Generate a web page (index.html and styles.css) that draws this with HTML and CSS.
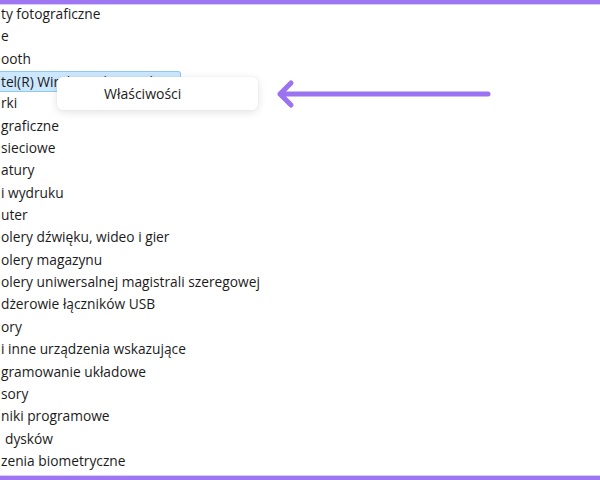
FILE: index.html
```html
<!DOCTYPE html>
<html lang="pl">
<head>
<meta charset="utf-8">
<title>Menedżer urządzeń</title>
<link rel="stylesheet" href="styles.css">
</head>
<body>
<div class="frame">
  <div class="bar bar-top"></div>
  <ul class="tree">
    <li>ty fotograficzne</li>
    <li>e</li>
    <li>ooth</li>
    <li class="selected"><span>tel(R) Wireless Bluetooth(R)</span></li>
    <li>rki</li>
    <li>graficzne</li>
    <li>sieciowe</li>
    <li>atury</li>
    <li>i wydruku</li>
    <li>uter</li>
    <li>olery dźwięku, wideo i gier</li>
    <li>olery magazynu</li>
    <li>olery uniwersalnej magistrali szeregowej</li>
    <li>dżerowie łączników USB</li>
    <li>ory</li>
    <li>i inne urządzenia wskazujące</li>
    <li>gramowanie układowe</li>
    <li>sory</li>
    <li>niki programowe</li>
    <li class="gap">dysków</li>
    <li>zenia biometryczne</li>
  </ul>
  <div class="bar bar-bottom"></div>

  <div class="menu">
    <div class="menu-item">Właściwości</div>
  </div>

  <svg class="arrow" width="220" height="30" viewBox="0 0 220 30" aria-hidden="true">
    <path d="M4 15 H212 M15 4 L4 15 L15 26" fill="none" stroke="#9b72ef" stroke-width="5" stroke-linecap="round" stroke-linejoin="round"/>
  </svg>
</div>
</body>
</html>
```

FILE: styles.css
```css
html, body {
  margin: 0;
  padding: 0;
  background: #ffffff;
}

.frame {
  position: relative;
  width: 600px;
  height: 480px;
  display: flex;
  flex-direction: column;
  overflow: hidden;
  font-family: "Open Sans", "Noto Sans", sans-serif;
  font-size: 13.75px;
  color: #1b1b1b;
}

.bar {
  flex: none;
  background: #9e76f1;
}

.bar-top {
  height: 4px;
  border-bottom: 1px solid #d9ccf7;
}

.bar-bottom {
  height: 4px;
  border-top: 1px solid #d9ccf7;
}

.tree {
  flex: 1;
  list-style: none;
  margin: -2px 0 0 0;
  padding: 0;
}

.tree li {
  height: 22.35px;
  line-height: 22.35px;
  padding-left: 1px;
  white-space: nowrap;
}

.tree li.gap {
  padding-left: 5px;
}

.tree li.selected {
  padding-left: 0;
}

.tree li.selected span {
  display: inline-block;
  box-sizing: border-box;
  width: 181px;
  height: 21px;
  line-height: 19px;
  margin-top: 1px;
  padding-left: 1px;
  overflow: hidden;
  background: #cce8ff;
  border: 1px solid #8fc8f4;
  border-left: none;
  border-radius: 0 3px 3px 0;
}

.menu {
  position: absolute;
  left: 57px;
  top: 77px;
  width: 201px;
  height: 33px;
  box-sizing: border-box;
  background: #ffffff;
  border-radius: 6px;
  box-shadow: 0 2px 8px rgba(0, 0, 0, 0.12), 0 0 2px rgba(0, 0, 0, 0.06);
  display: flex;
  align-items: center;
}

.menu-item {
  padding-left: 47px;
  font-size: 14px;
  color: #1b1b1b;
}

.arrow {
  position: absolute;
  left: 276px;
  top: 79px;
}
```
